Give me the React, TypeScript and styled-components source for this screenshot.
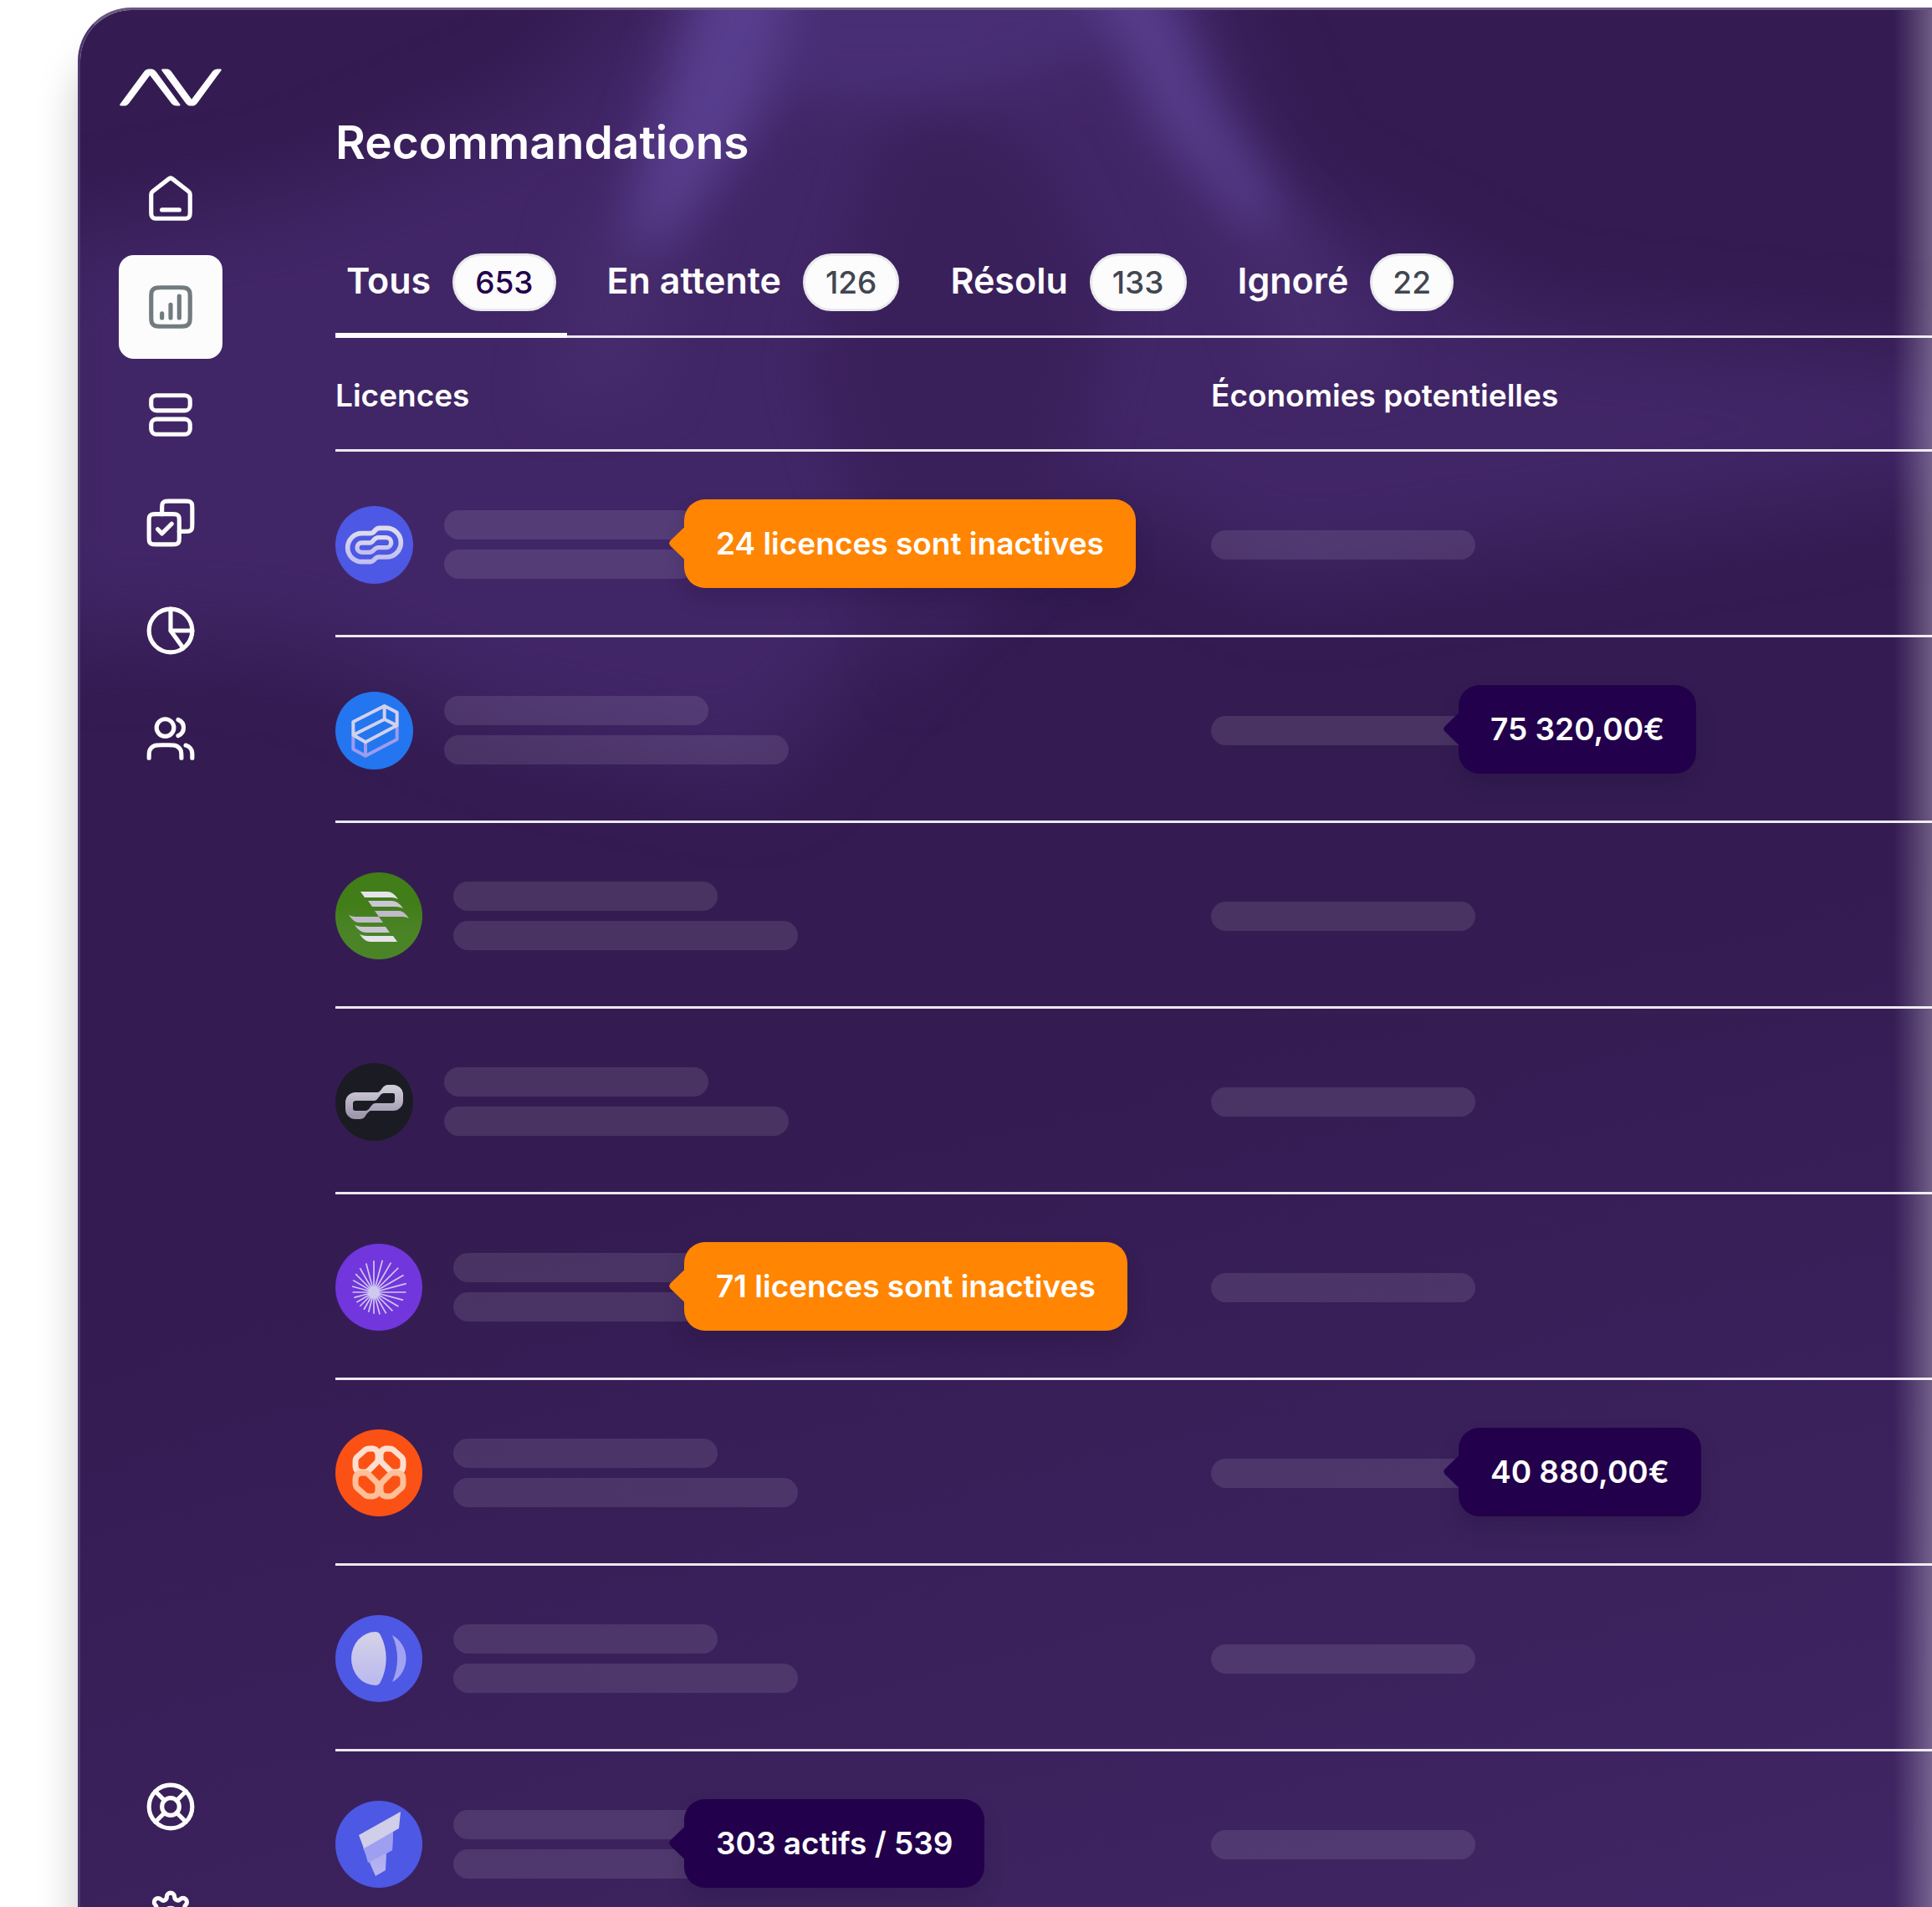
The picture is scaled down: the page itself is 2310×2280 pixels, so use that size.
import React from "react";
import styled, { createGlobalStyle } from "styled-components";

const GlobalStyle = createGlobalStyle`
  *, *::before, *::after { box-sizing: border-box; }
  html, body { margin: 0; background: #fff; }
  body { font-family: Inter, "Liberation Sans", sans-serif; color: #fdfdfd; }
  button { font: inherit; color: inherit; background: none; border: 0; padding: 0; cursor: pointer; }
`;

const Page = styled.div`
  height: 100vh;
  overflow: hidden;
  padding: 9px 0 0 93px;
`;

const Frame = styled.div`
  position: relative;
  display: flex;
  isolation: isolate;
  border: 3px solid #6a5680;
  border-left-color: #4d376e;
  border-right: 0;
  border-radius: 64px 0 0 0;
  background: linear-gradient(165deg, #341c52 0%, #341c52 52%, #381f58 68%, #412766 100%);
  background-clip: padding-box;
  box-shadow: 0 54px 50px rgba(0, 0, 0, 0.22);

  &::after {
    content: "";
    position: absolute;
    inset: 0 0 0 auto;
    width: 46px;
    background: linear-gradient(90deg, rgba(255, 255, 255, 0), rgba(255, 255, 255, 0.1) 40%, rgba(255, 255, 255, 0.28));
    pointer-events: none;
  }
`;

const Glow = styled.svg`
  position: absolute;
  inset: 0;
  z-index: -1;
  width: 100%;
  height: auto;
  border-radius: 61px 0 0 0;
`;

const Sidebar = styled.aside`
  flex: none;
  width: 305px;
  padding: 70px 0 40px 46px;
  display: flex;
  flex-direction: column;
  justify-content: space-between;
`;

const LogoLink = styled.a`
  display: block;
  width: 122px;
  height: 45px;
  margin: 0 0 49px 1px;
  color: #fdfdfd;

  svg { display: block; width: 100%; height: 100%; }
`;

const NavList = styled.nav`
  display: flex;
  flex-direction: column;
  gap: 5px;
`;

const NavButton = styled.button<{ $active?: boolean }>`
  width: 124px;
  height: 124px;
  display: grid;
  place-items: center;
  border-radius: 18px;
  color: ${(p) => (p.$active ? "#717b80" : "#fdfdfd")};
  background: ${(p) => (p.$active ? "#fcfcfc" : "transparent")};

  svg { width: 62px; height: 62px; }
`;

const Main = styled.main`
  flex: 1;
  min-width: 0;
  padding: 124px 0 75px;
`;

const Title = styled.h1`
  margin: 0 0 99px;
  font-size: 55px;
  line-height: 68px;
  font-weight: 600;
`;

const Tabs = styled.div`
  display: flex;
  gap: 35px;
  border-bottom: 3px solid #ece8ef;
`;

const Tab = styled.button<{ $active?: boolean }>`
  display: flex;
  align-items: baseline;
  gap: 26px;
  margin-bottom: -3px;
  padding: 0 13px 26px;
  border-bottom: 6px solid ${(p) => (p.$active ? "#fdfdfd" : "transparent")};
  font-size: 43px;
  line-height: 62px;
  font-weight: 600;
`;

const Count = styled.span<{ $active?: boolean }>`
  padding: 0 24px;
  border: 3px solid #e9eaeb;
  border-radius: 35px;
  background: #fcfcfc;
  color: ${(p) => (p.$active ? "#22004b" : "#414651")};
  font-size: 37px;
  line-height: 63px;
  font-weight: 500;
`;

const Table = styled.table`
  width: 100%;
  table-layout: fixed;
  border-collapse: separate;
  border-spacing: 0;
`;

const LicenceCol = styled.col`
  width: 1047px;
`;

const HeadCell = styled.th`
  padding: 47px 0 42px;
  border-bottom: 3px solid #ece8ef;
  text-align: left;
  font-size: 37px;
  line-height: 44px;
  font-weight: 600;
`;

const Cell = styled.td`
  position: relative;
  height: 222px;
  padding: 3px 0 0;
  border-bottom: 3px solid #ece8ef;
  vertical-align: middle;
`;

const Licence = styled.div`
  display: flex;
  align-items: center;
  gap: 37px;
`;

const Avatar = styled.span<{ $size: number; $color: string }>`
  flex: none;
  width: ${(p) => p.$size}px;
  height: ${(p) => p.$size}px;
  border-radius: 50%;
  overflow: hidden;
  background: ${(p) => p.$color};

  svg { display: block; width: 100%; height: 100%; }
`;

const Bars = styled.div`
  display: grid;
  gap: 12px;
`;

const Bar = styled.span<{ $width: number }>`
  display: block;
  width: ${(p) => p.$width}px;
  height: 35px;
  border-radius: 18px;
  background: rgba(255, 255, 255, 0.1);
`;

const Callout = styled.div<{ $left: number; $tone: "orange" | "violet" }>`
  position: absolute;
  z-index: 1;
  top: 50%;
  left: ${(p) => p.$left}px;
  transform: translateY(-50%);
  padding: 28px 38px;
  border-radius: 25px;
  background: ${(p) => (p.$tone === "orange" ? "#ff8503" : "#22004b")};
  box-shadow: 0 14px 24px rgba(20, 5, 40, 0.16);
  color: #fff;
  font-size: 37px;
  line-height: 50px;
  font-weight: 600;
  white-space: nowrap;

  &::before {
    content: "";
    position: absolute;
    top: 50%;
    right: 100%;
    width: 18px;
    height: 38px;
    margin-top: -19px;
    background: inherit;
    clip-path: polygon(100% 0, 8% 42%, 0 50%, 8% 58%, 100% 100%);
  }
`;

const Icon = ({ children }: { children: React.ReactNode }) => (
  <svg viewBox="0 0 24 24" fill="none" stroke="currentColor" strokeWidth="2" strokeLinecap="round" strokeLinejoin="round" aria-hidden="true">
    {children}
  </svg>
);

const HomeIcon = () => (
  <Icon>
    <path d="M8 17H16M11.0177 2.764L4.23539 8.03912C3.78202 8.39175 3.55534 8.56806 3.39203 8.78886C3.24737 8.98444 3.1396 9.20478 3.07403 9.43905C3 9.70352 3 9.9907 3 10.5651V17.8C3 18.9201 3 19.4801 3.21799 19.908C3.40973 20.2843 3.71569 20.5903 4.09202 20.782C4.51984 21 5.07989 21 6.2 21H17.8C18.9201 21 19.4802 21 19.908 20.782C20.2843 20.5903 20.5903 20.2843 20.782 19.908C21 19.4801 21 18.9201 21 17.8V10.5651C21 9.9907 21 9.70352 20.926 9.43905C20.8604 9.20478 20.7526 8.98444 20.608 8.78886C20.4447 8.56806 20.218 8.39175 19.7646 8.03913L12.9823 2.764C12.631 2.49075 12.4553 2.35412 12.2613 2.3016C12.0902 2.25526 11.9098 2.25526 11.7387 2.3016C11.5447 2.35412 11.369 2.49075 11.0177 2.764Z" />
  </Icon>
);

const ChartIcon = () => (
  <Icon>
    <path d="M8 15V17M12 11V17M16 7V17M7.8 21H16.2C17.8802 21 18.7202 21 19.362 20.673C19.9265 20.3854 20.3854 19.9265 20.673 19.362C21 18.7202 21 17.8802 21 16.2V7.8C21 6.11984 21 5.27976 20.673 4.63803C20.3854 4.07354 19.9265 3.6146 19.362 3.32698C18.7202 3 17.8802 3 16.2 3H7.8C6.11984 3 5.27976 3 4.63803 3.32698C4.07354 3.6146 3.6146 4.07354 3.32698 4.63803C3 5.27976 3 6.11984 3 7.8V16.2C3 17.8802 3 18.7202 3.32698 19.362C3.6146 19.9265 4.07354 20.3854 4.63803 20.673C5.27976 21 6.11984 21 7.8 21Z" />
  </Icon>
);

const RowsIcon = () => (
  <Icon>
    <rect x="3" y="3" width="18" height="7" rx="2.4" />
    <rect x="3" y="14" width="18" height="7" rx="2.4" />
  </Icon>
);

const TasksIcon = () => (
  <Icon>
    <path d="M6 15L8 17L12.5 12.5M8 8V5.2C8 4.0799 8 3.51984 8.21799 3.09202C8.40973 2.71569 8.71569 2.40973 9.09202 2.21799C9.51984 2 10.0799 2 11.2 2H18.8C19.9201 2 20.4802 2 20.908 2.21799C21.2843 2.40973 21.5903 2.71569 21.782 3.09202C22 3.51984 22 4.0799 22 5.2V12.8C22 13.9201 22 14.4802 21.782 14.908C21.5903 15.2843 21.2843 15.5903 20.908 15.782C20.4802 16 19.9201 16 18.8 16H16" />
    <path d="M5.2 22H12.8C13.9201 22 14.4802 22 14.908 21.782C15.2843 21.5903 15.5903 21.2843 15.782 20.908C16 20.4802 16 19.9201 16 18.8V11.2C16 10.0799 16 9.51984 15.782 9.09202C15.5903 8.71569 15.2843 8.40973 14.908 8.21799C14.4802 8 13.9201 8 12.8 8H5.2C4.0799 8 3.51984 8 3.09202 8.21799C2.71569 8.40973 2.40973 8.71569 2.21799 9.09202C2 9.51984 2 10.0799 2 11.2V18.8C2 19.9201 2 20.4802 2.21799 20.908C2.40973 21.2843 2.71569 21.5903 3.09202 21.782C3.51984 22 4.07989 22 5.2 22Z" />
  </Icon>
);

const PieIcon = () => (
  <Icon>
    <circle cx="12" cy="12" r="10" />
    <path d="M12 2V12M12 12H22M12 12L17.878 20.09" />
  </Icon>
);

const UsersIcon = () => (
  <Icon>
    <path d="M22 21V19C22 17.1362 20.7252 15.5701 19 15.126M15.5 3.29076C16.9659 3.88415 18 5.32131 18 7C18 8.67869 16.9659 10.1159 15.5 10.7092M17 21C17 19.1362 17 18.2044 16.6955 17.4693C16.2895 16.4892 15.5108 15.7105 14.5307 15.3045C13.7956 15 12.8638 15 11 15H8C6.13623 15 5.20435 15 4.46927 15.3045C3.48915 15.7105 2.71046 16.4892 2.30448 17.4693C2 18.2044 2 19.1362 2 21" />
    <circle cx="9.5" cy="7" r="4" />
  </Icon>
);

const SupportIcon = () => (
  <Icon>
    <circle cx="12" cy="12" r="10" />
    <circle cx="12" cy="12" r="4" />
    <path d="M4.93 4.93L9.17 9.17M14.83 9.17L19.07 4.93M14.83 14.83L19.07 19.07M9.17 14.83L4.93 19.07" />
  </Icon>
);

const SettingsIcon = () => (
  <Icon>
    <circle cx="12" cy="12" r="3" />
    <path
      strokeWidth="2.2"
      transform="translate(12 12) scale(0.909) translate(-12 -12)"
      d="M19.4 15a1.65 1.65 0 0 0 .33 1.82l.06.06a2 2 0 1 1-2.83 2.83l-.06-.06a1.65 1.65 0 0 0-2.8 1.17V21a2 2 0 0 1-4 0v-.09A1.65 1.65 0 0 0 9 19.4a1.65 1.65 0 0 0-1.82.33l-.06.06a2 2 0 1 1-2.83-2.83l.06-.06A1.65 1.65 0 0 0 3.09 14H3a2 2 0 0 1 0-4h.09A1.65 1.65 0 0 0 4.6 9a1.65 1.65 0 0 0-.33-1.82l-.06-.06a2 2 0 1 1 2.83-2.83l.06.06A1.65 1.65 0 0 0 9 4.68a1.65 1.65 0 0 0 1-1.51V3a2 2 0 0 1 4 0v.09a1.65 1.65 0 0 0 1 1.51 1.65 1.65 0 0 0 1.82-.33l.06-.06a2 2 0 1 1 2.83 2.83l-.06.06A1.65 1.65 0 0 0 19.4 9c.26.6.85 1 1.51 1H21a2 2 0 0 1 0 4h-.09a1.65 1.65 0 0 0-1.51 1z"
    />
  </Icon>
);

const Logo = () => (
  <svg viewBox="248 248 367 133" fill="currentColor" aria-hidden="true">
    <path d="M250 374L335 259Q342 248 353 248H362Q372 248 380 259L465 375Q468 381 461 381H453Q441 381 434 372L357 271L283 370Q275 381 265 381H254Q246 380 250 374Z" />
    <path d="M402 248H420Q427 248 433 256L507 357L583 256Q589 248 599 248H610Q617 249 613 254L528 370Q520 381 510 381H503Q493 381 485 370L400 254Q397 248 402 248Z" />
  </svg>
);

const Fade = ({ id, from, to }: { id: string; from: string; to: string }) => (
  <defs>
    <linearGradient id={id} x1="0" y1="0" x2="0" y2="1">
      <stop offset="0.1" stopColor={from} />
      <stop offset="0.9" stopColor={to} />
    </linearGradient>
  </defs>
);

const LoopMark = () => (
  <svg viewBox="3 13 279 279" fill="none" stroke="url(#loop)" aria-hidden="true">
    <Fade id="loop" from="#dddbec" to="#c3c1ee" />
    <path strokeWidth="17" d="M98 111H128Q137 111 143 103Q151 92 161 92H186A52 52 0 0 1 186 196H158Q150 196 144 204Q137 213 126 213H98A51 51 0 0 1 98 111Z" />
    <path strokeWidth="16" d="M98 145H127Q133 145 138 138Q147 126 158 126H185A18 18 0 0 1 185 162H158Q149 162 142 170Q134 179 125 179H98A17 17 0 0 1 98 145Z" />
  </svg>
);

const BoxMark = () => (
  <svg viewBox="3 679 279 279" fill="none" strokeWidth="12" strokeLinejoin="round" aria-hidden="true">
    <path stroke="#9c9cf0" d="M67 834V885L111 909L224 850V800M111 860V909" />
    <path stroke="#d2d1ec" d="M67 834V787L179 730L224 753V800L111 860L67 834L179 778L224 800M179 730V778" />
  </svg>
);

const StripeHalf = () => (
  <>
    <path fill="#e6e3ea" d="M30 23H62Q69 23 75 32Q71 30 67 30H35Z" />
    <path fill="#cbc6d4" d="M39 34H67Q75 34 81 43Q76 41 72 41H44Z" />
    <path fill="#c0bacb" d="M47 46H76Q82 46 88 55Q84 53 80 53H52Z" />
  </>
);

const StripesMark = () => (
  <svg viewBox="0 0 104 104" aria-hidden="true">
    <StripeHalf />
    <g transform="rotate(180 52 53)">
      <StripeHalf />
    </g>
  </svg>
);

const LinkMark = () => (
  <svg viewBox="0 0 93 93" aria-hidden="true">
    <Fade id="link" from="#cfcbd8" to="#9f97ad" />
    <path
      fill="url(#link)"
      fillRule="evenodd"
      d="M24 35H50Q53 35 56 30Q59 26 63 26H69A12 12 0 0 1 81 38V45A12 12 0 0 1 69 57H42Q39 58 36 63Q34 67 29 67H24A12 12 0 0 1 12 55V47A12 12 0 0 1 24 35ZM25 45H47Q49 45 51 42L54 38Q56 36 58 36H69Q71 36 71 38V45Q71 48 68 48H48Q45 48 43 51L40 55Q38 57 36 57H24Q21 57 21 54V48Q21 45 25 45Z"
    />
  </svg>
);

/* 24 rays leave an off-centre focus and stop on the surrounding circle. */
const RAYS = Array.from({ length: 24 }, (_, i) => {
  const a = (i * Math.PI) / 12;
  const [fx, fy, cx, cy, r] = [46, 58, 52.5, 52, 32.5];
  const [dx, dy] = [Math.sin(a), -Math.cos(a)];
  const b = (fx - cx) * dx + (fy - cy) * dy;
  const c = (fx - cx) ** 2 + (fy - cy) ** 2 - r * r;
  const t = -b + Math.sqrt(b * b - c);
  return `M${fx} ${fy}L${(fx + dx * t).toFixed(2)} ${(fy + dy * t).toFixed(2)}`;
}).join("");

const BurstMark = () => (
  <svg viewBox="0 0 104 104" aria-hidden="true">
    <path d={RAYS} stroke="#d0c9ef" strokeWidth="1.7" />
  </svg>
);

const PETAL = "M24 38Q24 35 26 33L35 25Q37 23 41 23H45Q51 24 51 31V35Q51 38 49 40L40 49Q38 51 35 51H32Q24 51 24 43Z";

const KnotMark = () => (
  <svg viewBox="0 0 104 104" fill="none" strokeWidth="7" aria-hidden="true">
    <path d={PETAL} stroke="#fddfcf" />
    <path d={PETAL} stroke="#fddfcf" transform="translate(105 0) scale(-1 1)" />
    <path d={PETAL} stroke="#ffbf98" transform="translate(0 103) scale(1 -1)" />
    <path d={PETAL} stroke="#ffbf98" transform="translate(105 103) scale(-1 -1)" />
  </svg>
);

const MoonMark = () => (
  <svg viewBox="0 0 104 104" aria-hidden="true">
    <Fade id="moon" from="#d2d0e8" to="#bdbbee" />
    <path fill="url(#moon)" d="M48 20A29 32 0 0 0 48 84Q52 84 54 80A62 62 0 0 0 54 24Q52 20 48 20Z" />
    <path fill="#a2a2f2" d="M68 24A32 32 0 0 1 68 80A68 68 0 0 0 68 24Z" />
  </svg>
);

const FlagMark = () => (
  <svg viewBox="0 0 104 104" aria-hidden="true">
    <Fade id="flag" from="#a9a8f2" to="#b5b3ef" />
    <path fill="url(#flag)" d="M33 56L69 37L68 59L61 63L60 83L48 90Z" />
    <path fill="#9f9ff2" d="M34 57L69 37L68 59L39 74Z" />
    <path fill="#d0cee9" d="M78 13L76 33L34 57L28 41Z" />
  </svg>
);

type Row = {
  name: string;
  size: number;
  color: string;
  mark: React.ReactNode;
  licences?: { text: string; tone: "orange" | "violet" };
  savings?: string;
};

const ROWS: Row[] = [
  { name: "loop", size: 93, color: "#4d58e4", mark: <LoopMark />, licences: { text: "24 licences sont inactives", tone: "orange" } },
  { name: "box", size: 93, color: "#2376ef", mark: <BoxMark />, savings: "75 320,00€" },
  { name: "stripes", size: 104, color: "linear-gradient(#417d18 35%, #4b8427 70%)", mark: <StripesMark /> },
  { name: "link", size: 93, color: "#1b1c23", mark: <LinkMark /> },
  { name: "burst", size: 104, color: "#7136dc", mark: <BurstMark />, licences: { text: "71 licences sont inactives", tone: "orange" } },
  { name: "knot", size: 104, color: "#fc5114", mark: <KnotMark />, savings: "40 880,00€" },
  { name: "moon", size: 104, color: "#4d58e4", mark: <MoonMark /> },
  { name: "flag", size: 104, color: "#4d58e4", mark: <FlagMark />, licences: { text: "303 actifs / 539", tone: "violet" } },
];

const TABS = [
  { label: "Tous", count: 653 },
  { label: "En attente", count: 126 },
  { label: "Résolu", count: 133 },
  { label: "Ignoré", count: 22 },
];

const NAV = [
  { label: "Accueil", icon: <HomeIcon /> },
  { label: "Recommandations", icon: <ChartIcon /> },
  { label: "Applications", icon: <RowsIcon /> },
  { label: "Tâches", icon: <TasksIcon /> },
  { label: "Rapports", icon: <PieIcon /> },
  { label: "Utilisateurs", icon: <UsersIcon /> },
];

const Backdrop = () => (
  <Glow viewBox="65 8 1503 1540" aria-hidden="true">
    <defs>
      <filter id="soft" x="-30%" y="-30%" width="160%" height="160%" colorInterpolationFilters="sRGB"><feGaussianBlur stdDeviation="34" /></filter>
      <filter id="mid" x="-40%" y="-40%" width="180%" height="180%" colorInterpolationFilters="sRGB"><feGaussianBlur stdDeviation="20" /></filter>
    </defs>
    <g filter="url(#soft)">
      <path fill="#412667" d="M20 200L240 160L440 80L560 -60H960L1040 150L1240 260L1620 300V380L1300 430L1040 470L900 400L760 460L620 630L420 590L240 520L20 510Z" />
    </g>
    <g filter="url(#mid)">
      <path fill="#3a205b" d="M720 110Q780 80 840 130L900 250L860 420L740 560L700 420L660 300Z" />
      <path fill="#482e74" d="M600 -20H920L880 50L760 80L640 80Z" />
      <path fill="#452b6c" d="M470 180L560 180L530 320L440 330Z" />
      <path fill="#452b6c" d="M980 150L1060 180L1130 300L1040 310Z" />
      <path fill="#583e8e" d="M575 -40H650L620 90L550 190L505 200L520 130Z" />
      <path fill="#583e8e" d="M870 -40H935L985 85L1045 175L1010 180L945 110Z" />
    </g>
  </Glow>
);

export default function App() {
  return (
    <>
      <GlobalStyle />
      <Page>
        <Frame>
          <Backdrop />
          <Sidebar>
            <div>
              <LogoLink href="#" aria-label="Accueil"><Logo /></LogoLink>
              <NavList aria-label="Navigation principale">
                {NAV.map((item, i) => (
                  <NavButton key={item.label} type="button" aria-label={item.label} $active={i === 1}>
                    {item.icon}
                  </NavButton>
                ))}
              </NavList>
            </div>
            <NavList aria-label="Aide et réglages">
              <NavButton type="button" aria-label="Aide"><SupportIcon /></NavButton>
              <NavButton type="button" aria-label="Réglages"><SettingsIcon /></NavButton>
            </NavList>
          </Sidebar>
          <Main>
            <Title>Recommandations</Title>
            <Tabs role="tablist">
              {TABS.map((tab, i) => (
                <Tab key={tab.label} type="button" role="tab" aria-selected={i === 0} $active={i === 0}>
                  {tab.label}
                  <Count $active={i === 0}>{tab.count}</Count>
                </Tab>
              ))}
            </Tabs>
            <Table>
              <colgroup>
                <LicenceCol />
                <col />
              </colgroup>
              <thead>
                <tr>
                  <HeadCell scope="col">Licences</HeadCell>
                  <HeadCell scope="col">Économies potentielles</HeadCell>
                </tr>
              </thead>
              <tbody>
                {ROWS.map((row) => (
                  <tr key={row.name}>
                    <Cell>
                      <Licence>
                        <Avatar $size={row.size} $color={row.color}>{row.mark}</Avatar>
                        <Bars>
                          <Bar $width={row.licences ? 300 : 316} />
                          <Bar $width={row.licences ? 300 : 412} />
                        </Bars>
                      </Licence>
                      {row.licences && (
                        <Callout $left={417} $tone={row.licences.tone}>{row.licences.text}</Callout>
                      )}
                    </Cell>
                    <Cell>
                      <Bar $width={316} />
                      {row.savings && <Callout $left={296} $tone="violet">{row.savings}</Callout>}
                    </Cell>
                  </tr>
                ))}
              </tbody>
            </Table>
          </Main>
        </Frame>
      </Page>
    </>
  );
}
